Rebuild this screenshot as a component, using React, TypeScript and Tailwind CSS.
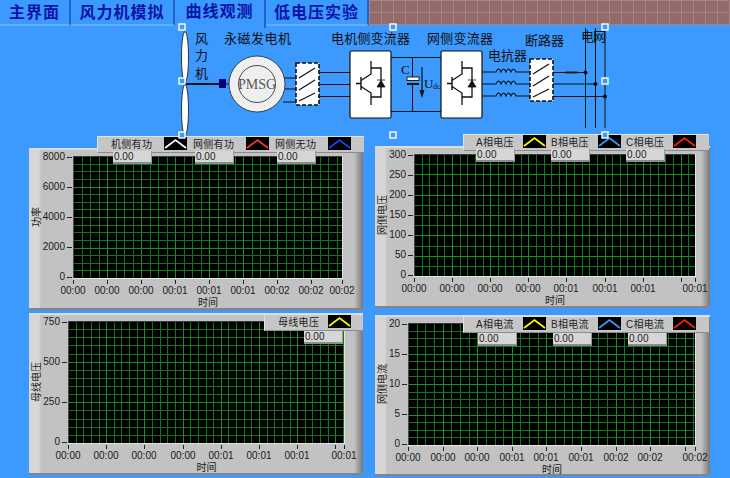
import React from 'react';

interface LegendItem {
  name: string;
  color: string;
}

interface ChartProps {
  title: string;
  panelClass: string;
  axisClass: string;
  plotW: number;
  plotH: number;
  yLabels: string[];
  yMinor: number;
  xStep: number;
  xMinor: number;
  xLabels: string[];
  legend: LegendItem[];
  legendClass: string;
  labelClass: string;
  itemClass: string;
  valueClass: string;
}

const TABS = ['主界面', '风力机模拟', '曲线观测', '低电压实验'];

function Tabs() {
  return (
    <div className="flex h-[26px] shrink-0">
      <div className="flex h-[26px] w-[369px]">
        <div className="flex w-[71px] items-start justify-center border-r-2 border-b-2 border-r-[#1f66c4] border-b-[#62aeff] pt-[4px] text-[16px] leading-[18px] font-bold tracking-[1px] text-[#0a14a8]">
          {TABS[0]}
        </div>
        <div className="flex w-[104px] items-start justify-center border-r-2 border-b-2 border-r-[#1f66c4] border-b-[#62aeff] pt-[4px] text-[16px] leading-[18px] font-bold tracking-[1px] text-[#0a14a8]">
          {TABS[1]}
        </div>
        <div className="relative z-[1] flex h-[28px] w-[91px] items-start justify-center border-r-2 border-r-[#1f66c4] pt-[3px] text-[16px] leading-[18px] font-bold tracking-[1px] text-[#0a14a8]">
          {TABS[2]}
        </div>
        <div className="flex w-[103px] items-start justify-center border-r-2 border-b-2 border-r-[#1f66c4] border-b-[#62aeff] pt-[4px] text-[16px] leading-[18px] font-bold tracking-[1px] text-[#0a14a8]">
          {TABS[3]}
        </div>
      </div>
      <div className="h-[25px] flex-1 bg-[#936b6b] bg-[linear-gradient(to_right,#a58484_1px,transparent_1px),linear-gradient(to_bottom,#a58484_1px,transparent_1px)] bg-[size:12px_12px]" />
    </div>
  );
}

function Igbt({ x }: { x: number }) {
  return (
    <g fill="none" stroke="#111" strokeWidth="1">
      <rect x={x} y="51" width="41" height="67" rx="1.5" fill="#fff" strokeWidth="1.2" />
      <path d={`M${x + 6} 83.5H${x + 11}M${x + 11} 77V90`} strokeWidth="1.4" />
      <path d={`M${x + 11} 80.5L${x + 21} 74V61M${x + 21} 68H${x + 31}V97H${x + 21}M${x + 11} 86.5L${x + 21} 93V105`} strokeWidth="1.3" />
      <path d={`M${x + 27} 87H${x + 35}L${x + 31} 80.5Z M${x + 27} 80H${x + 35}`} fill="#111" strokeWidth="0.8" />
    </g>
  );
}

function Breaker({ x, y }: { x: number; y: number }) {
  return (
    <g stroke="#111" fill="none">
      <rect x={x} y={y} width="23" height="42" fill="#fff" strokeWidth="1.6" strokeDasharray="4 2" />
      <path d={`M${x + 3} ${y + 15}L${x + 19} ${y + 5}M${x + 3} ${y + 27}L${x + 19} ${y + 17}M${x + 3} ${y + 38}L${x + 19} ${y + 30}`} strokeWidth="1.2" />
    </g>
  );
}

function Coil({ y }: { y: number }) {
  return (
    <path
      d={`M482 ${y}H496q2.5 -6 5 0q2.5 -6 5 0q2.5 -6 5 0q2.5 -6 5 0H530`}
      fill="none"
      stroke="#111"
      strokeWidth="1.1"
    />
  );
}

function Handle({ x, y }: { x: number; y: number }) {
  return <rect x={x - 3} y={y - 3} width="6" height="6" fill="#3c99fd" stroke="#fff" strokeWidth="1.4" />;
}

function Diagram() {
  const labelClass = 'fill-[#111] text-[13px]';
  return (
    <svg
      width="730"
      height="108"
      viewBox="0 26 730 108"
      className="relative z-10 block h-[108px] shrink-0 overflow-visible"
    >
      {/* wind turbine */}
      <ellipse cx="185" cy="57" rx="3.5" ry="25.5" fill="#fff" stroke="#111" strokeWidth="0.8" />
      <ellipse cx="185" cy="110" rx="3.5" ry="25.5" fill="#fff" stroke="#111" strokeWidth="0.8" />
      <path d="M185 84H220" stroke="#111" strokeWidth="2" />
      <rect x="219" y="79" width="7" height="9" fill="#00007c" />
      <path d="M226 84H232" stroke="#111" strokeWidth="1" />

      {/* generator */}
      <circle cx="257" cy="84" r="28" fill="#efefef" stroke="#222" strokeWidth="0.8" />
      <circle cx="257" cy="84" r="18.5" fill="#efefef" stroke="#222" strokeWidth="0.8" />
      <text x="257" y="89" textAnchor="middle" className="fill-[#555] text-[14px] [font-family:'Liberation_Serif',serif]">
        PMSG
      </text>
      <path d="M284 78H297M285 89H297M283 102H297" stroke="#111" strokeWidth="1" />
      <Breaker x={296} y={63} />
      <path d="M319 72.5H350M319 84.5H350M319 96.5H350" stroke="#111" strokeWidth="1" />

      {/* converters */}
      <path d="M391 57.5H441M391 111.5H441M412.5 57.5V78M412.5 85V111.5" stroke="#111" strokeWidth="1" fill="none" />
      <rect x="407" y="77" width="12" height="3.5" fill="#fff" stroke="#111" strokeWidth="0.9" />
      <rect x="407" y="83" width="12" height="2" fill="#111" />
      <path d="M422 67V91" stroke="#111" strokeWidth="1.2" />
      <path d="M419.5 90H424.5L422 98Z" fill="#111" />
      <Igbt x={350} />
      <Igbt x={441} />

      {/* reactor, breaker, grid */}
      <Coil y={72} />
      <Coil y={84} />
      <Coil y={96} />
      <Breaker x={530} y={59} />
      <path d="M553 72.5H586M553 84H596M553 96.5H605" stroke="#111" strokeWidth="1" />
      <path d="M565 72.5H578" stroke="#111" strokeWidth="1.8" />
      <path d="M585.5 28V128M595.5 28V128M605 28V128" stroke="#111" strokeWidth="1" />
      <circle cx="585.5" cy="72.5" r="2" fill="#111" />
      <circle cx="595.5" cy="84" r="2" fill="#111" />
      <circle cx="605" cy="96.5" r="2" fill="#111" />

      <text x="195" y="43" className={labelClass}>风</text>
      <text x="195" y="60" className={labelClass}>力</text>
      <text x="195" y="78" className={labelClass}>机</text>
      <text x="224" y="43" textLength="67" className={labelClass}>永磁发电机</text>
      <text x="331" y="43" textLength="79" className={labelClass}>电机侧变流器</text>
      <text x="427" y="43" textLength="66" className={labelClass}>网侧变流器</text>
      <text x="488" y="60" textLength="39" className={labelClass}>电抗器</text>
      <text x="525" y="45" textLength="39" className={labelClass}>断路器</text>
      <text x="581" y="41" textLength="25" className={labelClass}>电网</text>
      <text x="401" y="74" className="fill-[#111] text-[13px] [font-family:'Liberation_Serif',serif]">C</text>
      <text x="424" y="88" className="fill-[#111] text-[13px] [font-family:'Liberation_Serif',serif]">U</text>
      <text x="433" y="89" className="fill-[#111] text-[8px] [font-family:'Liberation_Serif',serif]">dc</text>

      <Handle x={182} y={27} />
      <Handle x={393} y={27} />
      <Handle x={605} y={27} />
      <Handle x={182} y={81} />
      <Handle x={605} y={81} />
      <Handle x={182} y={135} />
      <Handle x={393} y={135} />
      <Handle x={605} y={135} />
    </svg>
  );
}

function PlotGrid({ w, h, yDiv, yMinor, xStep, xMinor }: { w: number; h: number; yDiv: number; yMinor: number; xStep: number; xMinor: number }) {
  const vMinor: number[] = [];
  const vMajor: number[] = [];
  const hMinor: number[] = [];
  const hMajor: number[] = [];
  for (let i = 0; i * (xStep / xMinor) < w; i++) {
    const x = Math.round((i * xStep) / xMinor);
    if (i % xMinor === 0) vMajor.push(x);
    else vMinor.push(x);
  }
  const total = yDiv * yMinor;
  for (let i = 0; i <= total; i++) {
    const y = Math.round((i * h) / total);
    if (i % yMinor === 0) hMajor.push(y);
    else hMinor.push(y);
  }
  return (
    <svg width={w + 1} height={h + 1} className="block" shapeRendering="crispEdges">
      <rect width={w + 1} height={h + 1} fill="#000" />
      {vMinor.map((x) => <rect key={x} x={x} y="0" width="1" height={h} fill="#0c781e" />)}
      {hMinor.map((y) => <rect key={y} x="0" y={y} width={w} height="1" fill="#0c781e" />)}
      {vMajor.map((x) => <rect key={x} x={x} y="0" width="1" height={h} fill="#0e9420" />)}
      {hMajor.map((y) => <rect key={y} x="0" y={y} width={w} height="1" fill="#0e9420" />)}
      <rect x="0" y="0" width={w + 1} height="1" fill="#3a3a3a" />
      <rect x="0" y="0" width="1" height={h + 1} fill="#4a4a4a" />
      <rect x={w} y="0" width="1" height={h + 1} fill="#e4e4e4" />
      <rect x="0" y={h} width={w + 1} height="1" fill="#e4e4e4" />
    </svg>
  );
}

function Chart(props: ChartProps) {
  const { title, panelClass, axisClass, plotW, plotH, yLabels, yMinor, xStep, xMinor, xLabels, legend } = props;
  const ticks = xLabels.map((_, i) => (i === xLabels.length - 1 ? plotW : Math.round(i * xStep)));

  return (
    <div className={`relative flex border-t-2 border-b-2 border-t-[#dcdcdc] border-b-[#858585] bg-[linear-gradient(to_right,#d6d6d6_0,#d6d6d6_10px,#c2c2c2_12px,#c2c2c2_calc(100%-9px),#777_100%)] pt-[6px] ${panelClass}`}>
      <div className="flex h-[122px] w-[16px] shrink-0 items-center justify-center">
        <span className="-rotate-90 text-[10px] leading-[12px] whitespace-nowrap text-[#1a1a1a]">{title}</span>
      </div>
      <div className={`-mt-[5px] flex h-[132px] shrink-0 flex-col justify-between ${axisClass}`}>
        {yLabels.map((label) => (
          <div key={label} className="flex h-[12px] items-center justify-end text-[10px] leading-[12px] text-[#1a1a1a]">
            <span className="mr-[2px]">{label}</span>
            <span className="mr-[1px] h-px w-[5px] shrink-0 bg-[#222]" />
          </div>
        ))}
      </div>
      <div className="shrink-0">
        <PlotGrid w={plotW} h={plotH} yDiv={yLabels.length - 1} yMinor={yMinor} xStep={xStep} xMinor={xMinor} />
        <div className="mt-px flex h-[17px]">
          {ticks.map((x, i) => (
            <div key={i} className="shrink-0" style={{ width: i < ticks.length - 1 ? ticks[i + 1] - x : 0 }}>
              <div className="flex w-0 flex-col items-center">
                <span className="h-[4px] w-px shrink-0 bg-[#222]" />
                <span className="text-[10px] leading-[13px] whitespace-nowrap text-[#1a1a1a]">{xLabels[i]}</span>
              </div>
            </div>
          ))}
        </div>
        <div className="text-center text-[10px] leading-[12px] text-[#1a1a1a]">时间</div>
      </div>

      <div className={`absolute flex h-[17px] border-t border-l border-t-[#e2e2e2] border-l-[#e2e2e2] border-b border-b-[#8c8c8c] bg-[#c6c6c6] ${props.legendClass}`}>
        {legend.map((item) => (
          <div key={item.name} className={`relative flex shrink-0 items-start ${props.itemClass}`}>
            <span className={`shrink-0 pt-[1px] text-[10px] leading-[13px] tracking-[0.3px] whitespace-nowrap text-[#222] ${props.labelClass}`}>{item.name}</span>
            <svg width="23" height="13" className="block shrink-0">
              <rect width="23" height="13" fill="#000" />
              <path d="M1 11L11.5 3L22 11" fill="none" stroke={item.color} strokeWidth="1.6" />
            </svg>
            <div className={`absolute h-[13px] w-[39px] border-r border-b-2 border-r-[#9a9a9a] border-b-[#8c8c8c] bg-[#d6d6d6] pl-[1px] text-[10px] leading-[12px] text-[#222] ${props.valueClass}`}>
              0.00
            </div>
          </div>
        ))}
      </div>
    </div>
  );
}

export default function App() {
  return (
    <div className="flex h-[478px] w-[730px] flex-col overflow-hidden bg-[#3c99fd] [font-family:'Liberation_Sans','Noto_Sans_CJK_SC',sans-serif]">
      <Tabs />
      <Diagram />
      <div className="flex flex-1">
        <div className="ml-[29px] flex w-[334px] flex-col gap-[3px] pt-[14px]">
          <Chart
            title="功率"
            panelClass="h-[162px]"
            axisClass="w-[28px]"
            plotW={269}
            plotH={122}
            yLabels={['8000', '6000', '4000', '2000', '0']}
            yMinor={4}
            xStep={34}
            xMinor={4}
            xLabels={['00:00', '00:00', '00:00', '00:01', '00:01', '00:01', '00:02', '00:02', '00:02']}
            legend={[
              { name: '机侧有功', color: '#ffffff' },
              { name: '网侧有功', color: '#ff3838' },
              { name: '网侧无功', color: '#1048ff' },
            ]}
            legendClass="-top-[14px] left-[68px] w-[267px] pl-[13px]"
            labelClass="w-[53px]"
            itemClass="mr-[6px]"
            valueClass="left-[2px] top-[14px]"
          />
          <Chart
            title="母线电压"
            panelClass="h-[162px]"
            axisClass="w-[23px]"
            plotW={276}
            plotH={122}
            yLabels={['750', '500', '250', '0']}
            yMinor={5}
            xStep={38.2}
            xMinor={5}
            xLabels={['00:00', '00:00', '00:00', '00:00', '00:01', '00:01', '00:01', '', '00:01']}
            legend={[{ name: '母线电压', color: '#ffff00' }]}
            legendClass="-top-[1px] left-[235px] w-[99px] pl-[13px]"
            labelClass="w-[50px]"
            itemClass=""
            valueClass="left-[26px] top-[16px]"
          />
        </div>
        <div className="ml-[12px] flex w-[335px] flex-col gap-[7px] pt-[12px]">
          <Chart
            title="网侧电压"
            panelClass="h-[162px]"
            axisClass="w-[23px]"
            plotW={281}
            plotH={122}
            yLabels={['300', '250', '200', '150', '100', '50', '0']}
            yMinor={2}
            xStep={38.1}
            xMinor={5}
            xLabels={['00:00', '00:00', '00:00', '00:00', '00:01', '00:01', '00:01', '', '00:01']}
            legend={[
              { name: 'A相电压', color: '#ffff00' },
              { name: 'B相电压', color: '#30a0ff' },
              { name: 'C相电压', color: '#ff2000' },
            ]}
            legendClass="-top-[14px] left-[88px] w-[246px] pl-[12px]"
            labelClass="w-[47px]"
            itemClass="mr-[5px]"
            valueClass="left-0 top-[14px]"
          />
          <Chart
            title="网侧电流"
            panelClass="h-[161px]"
            axisClass="w-[17px]"
            plotW={287}
            plotH={122}
            yLabels={['20', '15', '10', '5', '0']}
            yMinor={4}
            xStep={34.6}
            xMinor={4}
            xLabels={['00:00', '00:00', '00:00', '00:01', '00:01', '00:01', '00:02', '00:02', '', '00:02']}
            legend={[
              { name: 'A相电流', color: '#ffff00' },
              { name: 'B相电流', color: '#30a0ff' },
              { name: 'C相电流', color: '#ff2000' },
            ]}
            legendClass="-top-[1px] left-[88px] w-[246px] pl-[12px]"
            labelClass="w-[47px]"
            itemClass="mr-[5px]"
            valueClass="left-[2px] top-[16px]"
          />
        </div>
      </div>
    </div>
  );
}
